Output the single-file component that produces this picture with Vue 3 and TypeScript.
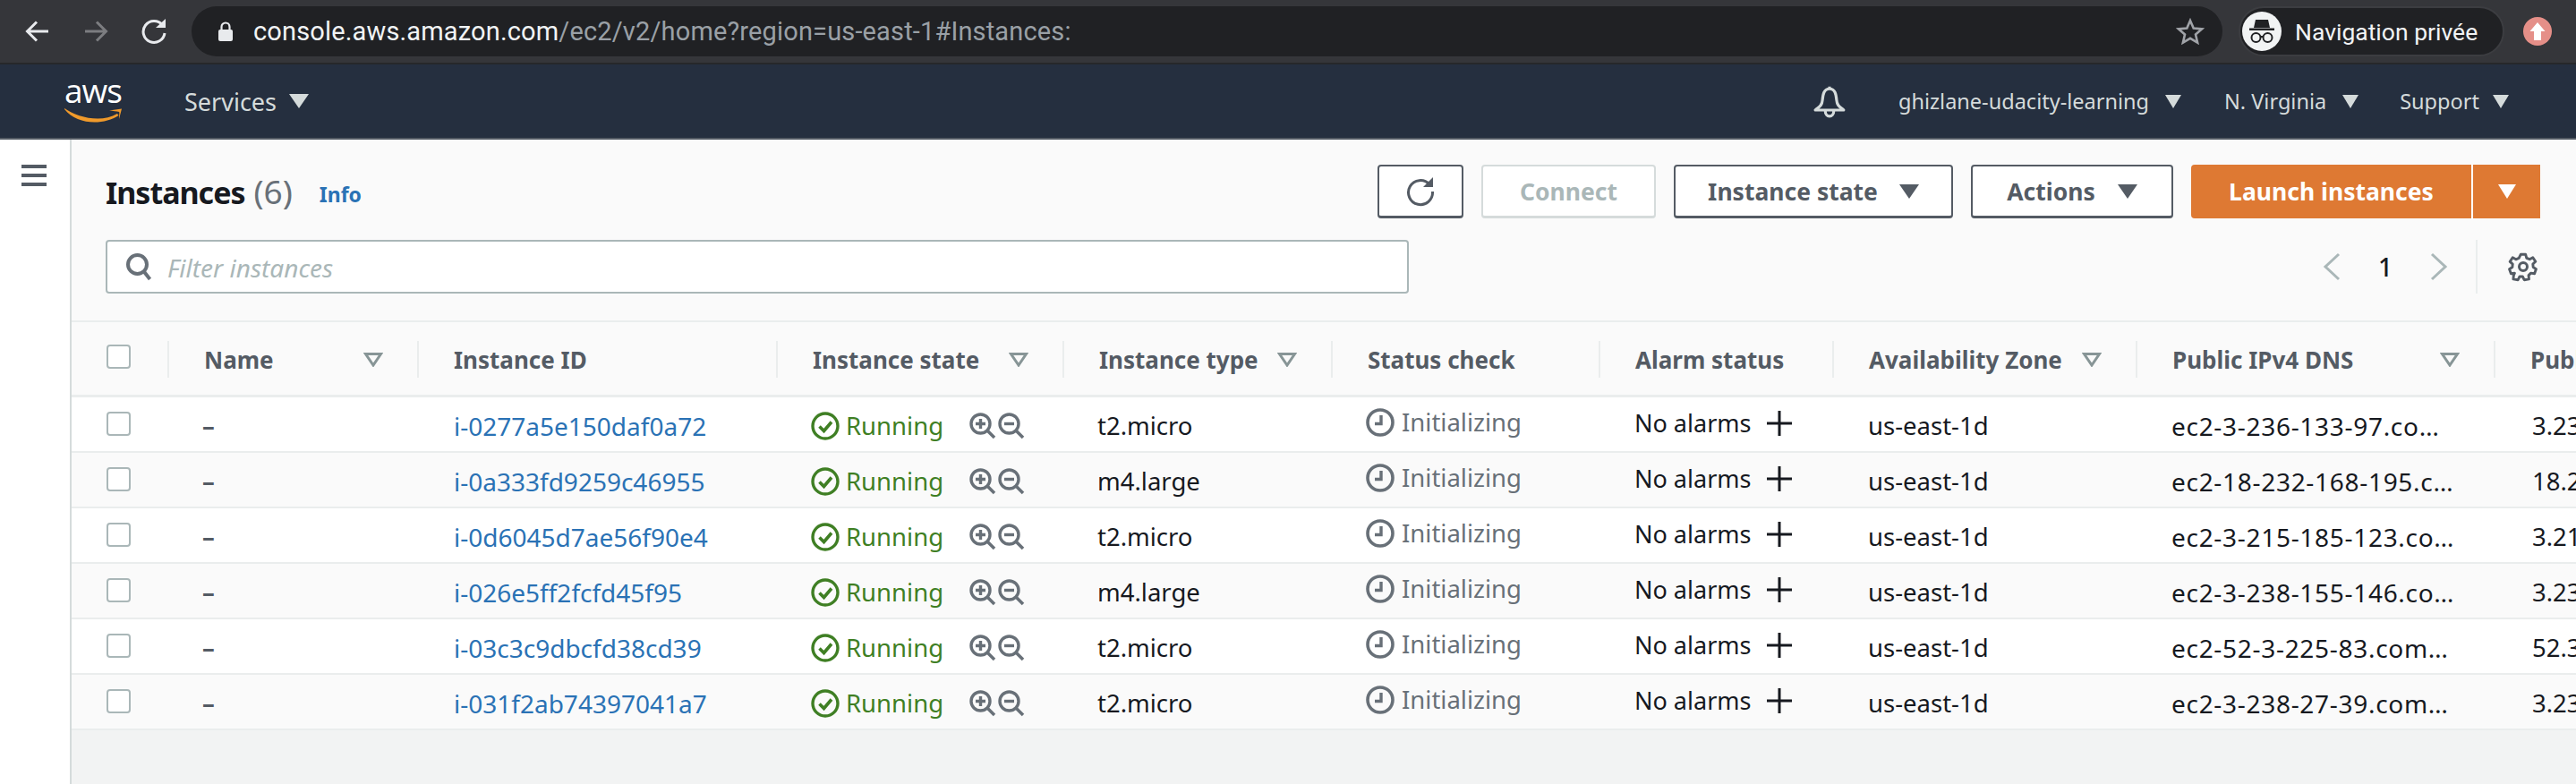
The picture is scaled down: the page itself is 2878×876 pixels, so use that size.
<script setup lang="ts">
interface Row { id: string; type: string; dns: string; ip: string }
const rows: Row[] = [
  { id: 'i-0277a5e150daf0a72', type: 't2.micro', dns: 'ec2-3-236-133-97.co…', ip: '3.236.133.97' },
  { id: 'i-0a333fd9259c46955', type: 'm4.large', dns: 'ec2-18-232-168-195.c…', ip: '18.232.168.195' },
  { id: 'i-0d6045d7ae56f90e4', type: 't2.micro', dns: 'ec2-3-215-185-123.co…', ip: '3.215.185.123' },
  { id: 'i-026e5ff2fcfd45f95', type: 'm4.large', dns: 'ec2-3-238-155-146.co…', ip: '3.238.155.146' },
  { id: 'i-03c3c9dbcfd38cd39', type: 't2.micro', dns: 'ec2-52-3-225-83.com…', ip: '52.3.225.83' },
  { id: 'i-031f2ab74397041a7', type: 't2.micro', dns: 'ec2-3-238-27-39.com…', ip: '3.238.27.39' },
]
const heads = [
  { label: 'Name', sort: true },
  { label: 'Instance ID', sort: false },
  { label: 'Instance state', sort: true },
  { label: 'Instance type', sort: true },
  { label: 'Status check', sort: false },
  { label: 'Alarm status', sort: false },
  { label: 'Availability Zone', sort: true },
  { label: 'Public IPv4 DNS', sort: true },
  { label: 'Public IPv4 address', sort: false },
]
const colWidths = [107, 279, 401, 320, 300, 299, 261, 339, 400, 300]
</script>

<template>
  <div class="page">
    <header class="chrome">
      <svg class="cicon first" width="28" height="28" viewBox="0 0 28 28"><path d="M26 14H3M13 3.500 2.500 14 13 24.500" fill="none" stroke="#e8eaed" stroke-width="3"/></svg>
      <svg class="cicon fwd" width="28" height="28" viewBox="0 0 28 28"><path d="M2 14h23M15 3.500 25.500 14 15 24.500" fill="none" stroke="#7c7d80" stroke-width="3"/></svg>
      <svg class="cicon rel" width="30" height="30" viewBox="0 0 30 30"><path d="M24.500 8A12 12 0 1 0 27 17" fill="none" stroke="#e8eaed" stroke-width="3"/><path d="M17 11h11V1z" fill="#e8eaed"/></svg>
      <div class="omni">
        <svg width="18" height="22" viewBox="0 0 18 22"><rect x="1" y="9" width="16" height="13" rx="2" fill="#e8eaed"/><path d="M4.500 10V6a4.500 4.500 0 0 1 9 0v4" fill="none" stroke="#e8eaed" stroke-width="2.200"/></svg>
        <span class="url"><span class="host">console.aws.amazon.com</span><span class="path">/ec2/v2/home?region=us-east-1#Instances:</span></span>
        <svg class="star" width="32" height="30" viewBox="0 0 32 30"><path d="M16 3l3.700 8.600 9.300.8-7 6.100 2.100 9.100L16 22.800l-8.100 4.800L10 18.500 3 12.400l9.300-.8z" fill="none" stroke="#a0a3a8" stroke-width="2.600"/></svg>
      </div>
      <div class="incog">
        <span class="avatar">
          <svg width="34" height="34" viewBox="0 0 34 34"><path d="M10 4h14l2 9H8z M3 13.500h28v2.500H3z" fill="#202124"/><circle cx="10.500" cy="24" r="5" fill="none" stroke="#202124" stroke-width="2"/><circle cx="23.500" cy="24" r="5" fill="none" stroke="#202124" stroke-width="2"/><path d="M15 23h4" stroke="#202124" stroke-width="2"/></svg>
        </span>
        <span class="incog-label">Navigation privée</span>
      </div>
      <span class="update">
        <svg width="20" height="22" viewBox="0 0 20 22"><path d="M10 1l8.500 10H14v10H6V11H1.500z" fill="#fff"/></svg>
      </span>
    </header>

    <nav class="awsnav">
      <div class="logo">
        <span class="logo-text">aws</span>
        <svg class="smile" width="68" height="18" viewBox="0 0 68 18">
          <path d="M1 1C15 11 42 18 60 7l1.500 2C45 20 15 20 1 2z" fill="#f09a2b"/>
          <path d="M51 3.500 65 1.500 62 13c-.3-3 .8-6.200.2-8-3-.8-7-1-11.200-1.500z" fill="#f09a2b"/>
        </svg>
      </div>
      <span class="nav-item services">Services <i class="tri big"></i></span>
      <svg class="bell" width="38" height="38" viewBox="0 0 36 36"><path d="M18 2.500v3M18 5c-6 0-7 6-7.500 12S7 24 3 27.500h30C29 24 26 23 25.500 17S24 5 18 5zM13.500 28.500a4.500 5.500 0 0 0 9 0" fill="none" stroke="#d5dbdb" stroke-width="3" stroke-linejoin="round"/></svg>
      <span class="nav-item account">ghizlane-udacity-learning <i class="tri"></i></span>
      <span class="nav-item region">N. Virginia <i class="tri"></i></span>
      <span class="nav-item support">Support <i class="tri"></i></span>
    </nav>

    <div class="shell">
      <aside class="side">
        <span class="burger"><i></i><i></i><i></i></span>
      </aside>
      <main class="content">
        <div class="titlebar">
          <h1 class="title">Instances <span class="count">(6)</span></h1>
          <a class="info">Info</a>
          <div class="actions">
            <button class="btn refresh" type="button">
              <svg width="34" height="34" viewBox="0 0 34 34"><path d="M27 9A13.500 13.500 0 1 0 30.500 17" fill="none" stroke="#545b64" stroke-width="3"/><path d="M20 12h11V1z" fill="#545b64"/></svg>
            </button>
            <button class="btn connect" type="button">Connect</button>
            <button class="btn state" type="button">Instance state <i class="tri dark"></i></button>
            <button class="btn acts" type="button">Actions <i class="tri dark"></i></button>
            <div class="launch">
              <button class="launch-main" type="button">Launch instances</button>
              <button class="launch-drop" type="button"><i class="tri white"></i></button>
            </div>
          </div>
        </div>

        <div class="filterbar">
          <label class="filter">
            <svg width="32" height="32" viewBox="0 0 32 32"><circle cx="13.500" cy="13.500" r="10.500" fill="none" stroke="#687078" stroke-width="4"/><path d="M20.500 21l7 9" stroke="#687078" stroke-width="4"/></svg>
            <span class="placeholder">Filter instances</span>
          </label>
          <div class="pager">
            <svg class="chev" width="22" height="32" viewBox="0 0 22 32"><path d="M19 2 4 16l15 14" fill="none" stroke="#aab7b8" stroke-width="3"/></svg>
            <span class="pagenum">1</span>
            <svg class="chev" width="22" height="32" viewBox="0 0 22 32"><path d="M3 2l15 14L3 30" fill="none" stroke="#aab7b8" stroke-width="3"/></svg>
          </div>
          <div class="gearbox">
            <svg width="34" height="34" viewBox="0 0 34 34">
              <path d="M14 2h6l1.200 4.400 3.700 1.500 4-2.200 3.300 5-3.300 3 .4 3.800 3.600 2.400-2 5.600-4.400-.6-2.800 2.700.4 4.600-5.800 1-2-4.100h-3.600l-2 4.100-5.800-1 .4-4.600L6.500 25l-4.400.6-2-5.600 3.600-2.400.4-3.800-3.300-3 3.300-5 4 2.200 3.700-1.500z" transform="translate(1.500 1.500) scale(0.91)" fill="none" stroke="#545b64" stroke-width="3.200" stroke-linejoin="round"/>
              <circle cx="17" cy="17" r="4.500" fill="none" stroke="#545b64" stroke-width="3"/>
            </svg>
          </div>
        </div>

        <div class="tablewrap">
          <table class="grid">
            <colgroup><col v-for="(w, i) in colWidths" :key="i" :style="{ width: w + 'px' }" /></colgroup>
            <thead>
              <tr>
                <th class="chk"><span class="box"></span></th>
                <th v-for="h in heads" :key="h.label">
                  <div class="th">
                    <span>{{ h.label }}</span>
                    <svg v-if="h.sort" width="22" height="16" viewBox="0 0 22 16"><path d="M2.500 1.500h17L11 14z" fill="none" stroke="#879596" stroke-width="3"/></svg>
                  </div>
                </th>
              </tr>
            </thead>
            <tbody>
              <tr v-for="r in rows" :key="r.id">
                <td class="chk"><span class="box"></span></td>
                <td class="name">–</td>
                <td class="id"><a>{{ r.id }}</a></td>
                <td class="st">
                  <div class="st-in">
                    <svg width="32" height="32" viewBox="0 0 32 32"><circle cx="16" cy="16" r="14" fill="none" stroke="#3f7f24" stroke-width="3.400"/><path d="M9.500 16.500l5 5 8.500-10" fill="none" stroke="#3f7f24" stroke-width="3.600"/></svg>
                    <span class="running">Running</span>
                    <svg class="zoom-a" width="30" height="30" viewBox="0 0 30 30"><circle cx="12.500" cy="12.500" r="10.500" fill="none" stroke="#687078" stroke-width="3.400"/><path d="M20 20l8 8" stroke="#687078" stroke-width="3.600"/><path d="M7 12.500h11M12.500 7v11" stroke="#687078" stroke-width="3.400"/></svg>
                    <svg class="zoom-b" width="30" height="30" viewBox="0 0 30 30"><circle cx="12.500" cy="12.500" r="10.500" fill="none" stroke="#687078" stroke-width="3.400"/><path d="M20 20l8 8" stroke="#687078" stroke-width="3.600"/><path d="M7 12.500h11" stroke="#687078" stroke-width="3.400"/></svg>
                  </div>
                </td>
                <td class="ty">{{ r.type }}</td>
                <td class="sc">
                  <div class="sc-in">
                    <svg width="32" height="32" viewBox="0 0 32 32"><circle cx="16" cy="16" r="14" fill="none" stroke="#687078" stroke-width="3.600"/><path d="M17 8v9.500H10" fill="none" stroke="#687078" stroke-width="3.400"/></svg>
                    <span>Initializing</span>
                  </div>
                </td>
                <td class="al">
                  <div class="al-in">
                    <span>No alarms</span>
                    <svg width="30" height="30" viewBox="0 0 30 30"><path d="M15 1v28M1 15h28" stroke="#16191f" stroke-width="3"/></svg>
                  </div>
                </td>
                <td class="az">us-east-1d</td>
                <td class="dns">{{ r.dns }}</td>
                <td class="ip">{{ r.ip }}</td>
              </tr>
            </tbody>
          </table>
        </div>
      </main>
    </div>
  </div>
</template>

<style>
html, body { margin: 0; padding: 0; overflow: hidden; background: #fff; }
</style>

<style scoped>
* { box-sizing: border-box; }
.page { width: 2878px; height: 876px; display: flex; flex-direction: column; overflow: hidden; font-family: "Noto Sans", "Open Sans", sans-serif; color: #16191f; }

.chrome { height: 72px; flex: none; display: flex; align-items: center; background: #35363a; border-bottom: 2px solid #26272a; }
.cicon { flex: none; }
.first { margin-left: 28px; }
.fwd { margin-left: 37px; }
.rel { margin-left: 36px; }
.omni { margin-left: 27px; width: 2269px; height: 56px; border-radius: 28px; background: #202124; display: flex; align-items: center; padding-left: 29px; }
.url { margin-left: 22px; font-family: "Roboto", sans-serif; font-size: 29px; letter-spacing: 0.15px; white-space: nowrap; }
.host { color: #f1f3f4; }
.path { color: #9aa0a6; }
.star { margin-left: auto; margin-right: 20px; }
.incog { margin-left: 18px; width: 297px; height: 56px; border-radius: 28px; background: #202124; border: 2px solid #3c3d41; display: flex; align-items: center; padding-left: 2px; }
.avatar { width: 44px; height: 44px; border-radius: 50%; background: #f1f3f4; display: flex; align-items: center; justify-content: center; flex: none; }
.incog-label { margin-left: 15px; font-family: "Roboto", sans-serif; font-size: 26.500px; color: #f1f3f4; white-space: nowrap; }
.update { margin-left: 21px; width: 32px; height: 32px; border-radius: 50%; background: #e58f88; display: flex; align-items: center; justify-content: center; flex: none; }

.awsnav { height: 84px; flex: none; background: #252f3f; border-bottom: 2px solid #545b64; display: flex; align-items: center; color: #d5dbdb; }
.logo { position: relative; margin-left: 71px; width: 68px; height: 46px; flex: none; }
.logo-text { position: absolute; left: 1px; top: -9px; font-family: "Open Sans", sans-serif; font-size: 37px; line-height: 40px; color: #fff; letter-spacing: -1px; }
.smile { position: absolute; left: 0; top: 30px; }
.nav-item { display: inline-flex; align-items: center; white-space: nowrap; font-size: 23.500px; }
.services { margin-left: 67px; font-size: 27px; gap: 14px; }
.bell { margin-left: 1680px; flex: none; }
.account { margin-left: 58px; gap: 18px; }
.region { margin-left: 48px; gap: 18px; }
.support { margin-left: 46px; gap: 15px; }
.tri { display: inline-block; width: 0; height: 0; border-left: 9px solid transparent; border-right: 9px solid transparent; border-top: 15px solid #d5dbdb; }
.tri.big { border-left-width: 11px; border-right-width: 11px; border-top-width: 16px; }
.tri.dark { border-left-width: 11px; border-right-width: 11px; border-top-width: 16px; border-top-color: #545b64; }
.tri.white { border-top-color: #fff; border-left-width: 10px; border-right-width: 10px; border-top-width: 16px; }

.shell { flex: 1; min-height: 0; display: flex; }
.side { width: 80px; flex: none; background: #fff; border-right: 2px solid #d5dbdb; padding: 28px 0 0 24px; }
.burger { display: flex; flex-direction: column; gap: 6px; width: 28px; }
.burger i { display: block; height: 4px; background: #545b64; }
.content { flex: 1; min-width: 0; background: #fafafa; display: flex; flex-direction: column; overflow: hidden; }

.titlebar { margin-top: 28px; height: 60px; flex: none; display: flex; align-items: center; padding: 0 40px 0 38px; }
.title { margin: 0; font-size: 34px; font-weight: 700; letter-spacing: -1px; line-height: 60px; white-space: nowrap; }
.count { margin-left: 2px; font-size: 37px; font-weight: 400; color: #687078; letter-spacing: 0; }
.info { margin-left: 30px; margin-top: 6px; font-size: 23px; font-weight: 700; color: #2a72b5; }
.actions { margin-left: auto; display: flex; gap: 20px; height: 60px; }
.btn { height: 60px; padding: 0; background: #fff; border: 2px solid #545b64; border-bottom-width: 3px; border-radius: 4px; color: #545b64; font: 700 26.500px "Noto Sans", sans-serif; display: flex; align-items: center; justify-content: center; white-space: nowrap; }
.refresh { width: 96px; }
.connect { width: 195px; border-color: #d5dbdb; color: #aab7b8; }
.state { width: 312px; gap: 24px; }
.acts { width: 226px; gap: 25px; }
.launch { width: 390px; display: flex; height: 60px; }
.launch-main { width: 315px; border: 0; border-right: 2px solid #fff; border-radius: 4px 0 0 4px; background: #de7933; color: #fff; font: 700 26.500px "Noto Sans", sans-serif; padding: 0; }
.launch-drop { flex: 1; border: 0; background: #de7933; display: flex; align-items: center; justify-content: center; padding: 0; }

.filterbar { margin-top: 24px; height: 60px; flex: none; display: flex; align-items: center; padding: 0 42px 0 38px; }
.filter { width: 1456px; height: 60px; background: #fff; border: 2px solid #aab7b8; border-radius: 4px; display: flex; align-items: center; padding-left: 20px; }
.placeholder { margin-left: 15px; margin-top: 2px; font-style: italic; font-size: 28px; color: #aab7b8; }
.pager { margin-left: auto; display: flex; align-items: center; }
.chev { flex: none; }
.pagenum { width: 98px; text-align: center; font-size: 28px; font-weight: 500; color: #16191f; }
.gearbox { margin-left: 30px; padding-left: 34px; height: 60px; border-left: 2px solid #eaeded; display: flex; align-items: center; }

.tablewrap { margin-top: 30px; flex: 1; background: #f2f3f3; border-top: 2px solid #eaeded; overflow: hidden; }
.grid { table-layout: fixed; border-collapse: separate; border-spacing: 0; width: 2806px; font-size: 27.500px; }
.grid th { height: 84px; padding: 0; background: #fafafa; border-bottom: 3px solid #eaeded; text-align: left; color: #545b64; font-size: 26px; font-weight: 700; }
.th { height: 41px; margin-top: 2px; padding: 0 38px 0 39px; border-left: 2px solid #eaeded; display: flex; align-items: center; justify-content: space-between; white-space: nowrap; }
.grid td { height: 62px; padding: 0; background: #fff; border-bottom: 2px solid #eaeded; white-space: nowrap; overflow: visible; padding-top: 3px; }
.grid tbody tr:nth-child(even) td { background: #fafafa; }
.grid .chk { padding: 0 0 4px 39px; vertical-align: middle; }
.grid td.chk { padding-bottom: 2px; padding-top: 0; }
.box { display: block; width: 27px; height: 27px; background: #fff; border: 2px solid #aab7b8; border-radius: 4px; }
.name { padding-left: 39px !important; color: #545b64; font-weight: 700; }
.id { padding-left: 41px !important; font-size: 28px; }
.id a { color: #2a72b5; }
.st-in { display: flex; align-items: center; padding-left: 39px; }
.running { margin-left: 7px; width: 138px; color: #3f7f24; }
.zoom-b { margin-left: 2px; }
.ty { padding-left: 39px !important; }
.sc-in { display: flex; align-items: center; gap: 8px; padding-left: 39px; margin-top: -8px; color: #687078; }
.al-in { display: flex; align-items: center; gap: 17px; padding-left: 40px; margin-top: -6px; font-size: 27px; }
.az { padding-left: 40px !important; }
.dns { padding-left: 40px !important; font-size: 28px; letter-spacing: 0.7px; }
.ip { padding-left: 43px !important; }
</style>
